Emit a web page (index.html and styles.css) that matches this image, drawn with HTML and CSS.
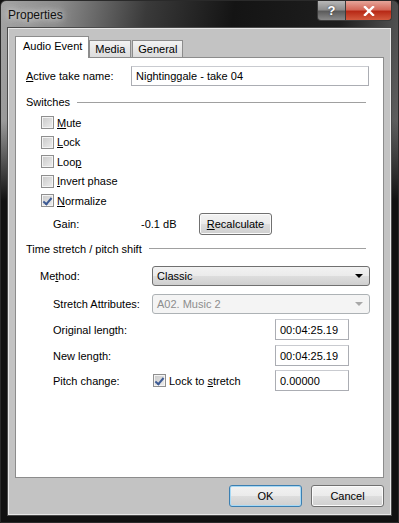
FILE: index.html
```html
<!DOCTYPE html>
<html lang="en">
<head>
    <meta charset="UTF-8">
    <title>Properties</title>
    <link rel="stylesheet" href="styles.css">
</head>
<body>
    <div class="window">
        <div class="titlebar">
            <span class="title">Properties</span>
            <div class="caption-buttons">
                <span class="cap-btn help">?</span>
                <span class="cap-btn close">
                    <svg width="12" height="10" viewBox="0 0 12 10"><path d="M2 1 L10 9 M10 1 L2 9" stroke="#fff" stroke-width="2.4" stroke-linecap="square"/></svg>
                </span>
            </div>
        </div>

        <div class="client">
            <div class="tabs">
                <span class="tab active">Audio Event</span>
                <span class="tab">Media</span>
                <span class="tab">General</span>
            </div>

            <div class="panel">
                <div class="row take-row">
                    <label class="lbl w105"><u>A</u>ctive take name:</label>
                    <div class="field w238">Nightinggale - take 04</div>
                </div>

                <div class="row group-row switches">
                    <span class="group-title">Switches</span>
                    <span class="group-line"></span>
                </div>

                <div class="checks">
                    <div class="check-row"><span class="box"></span><span><u>M</u>ute</span></div>
                    <div class="check-row"><span class="box"></span><span><u>L</u>ock</span></div>
                    <div class="check-row"><span class="box"></span><span>Loo<u>p</u></span></div>
                    <div class="check-row"><span class="box"></span><span><u>I</u>nvert phase</span></div>
                    <div class="check-row"><span class="box checked"></span><span><u>N</u>ormalize</span></div>
                </div>

                <div class="row gain-row">
                    <span class="lbl w88">Gain:</span>
                    <span class="lbl w58">-0.1 dB</span>
                    <span class="button recalc"><u>R</u>ecalculate</span>
                </div>

                <div class="row group-row stretch-group">
                    <span class="group-title">Time stretch / pitch shift</span>
                    <span class="group-line"></span>
                </div>

                <div class="row method-row">
                    <span class="lbl w112">Me<u>t</u>hod:</span>
                    <div class="combo">
                        <span>Classic</span>
                        <span class="arrow"></span>
                    </div>
                </div>

                <div class="row attr-row">
                    <span class="lbl w99">Stretch Attributes:</span>
                    <div class="combo disabled">
                        <span>A02. Music 2</span>
                        <span class="arrow"></span>
                    </div>
                </div>

                <div class="row len-row orig">
                    <span class="lbl w222">Original length:</span>
                    <div class="field w74">00:04:25.19</div>
                </div>

                <div class="row len-row newlen">
                    <span class="lbl w222">New len<u>g</u>th:</span>
                    <div class="field w74">00:04:25.19</div>
                </div>

                <div class="row len-row pitch">
                    <span class="lbl w99">Pitch change:</span>
                    <div class="lock">
                        <span class="box checked"></span>
                        <span>Lock to <u>s</u>tretch</span>
                    </div>
                    <div class="field w74">0.00000</div>
                </div>
            </div>

            <div class="footer">
                <span class="button dlg default">OK</span>
                <span class="button dlg">Cancel</span>
            </div>
        </div>
    </div>
</body>
</html>
```

FILE: styles.css
```css
body {
    margin: 0;
    width: 399px;
    height: 523px;
    font-family: "Liberation Sans", Arial, sans-serif;
    font-size: 11px;
    color: #000;
    background: #111;
}
.window {
    width: 399px;
    height: 523px;
    box-sizing: border-box;
    padding: 0 7px 7px 7px;
    display: flex;
    flex-direction: column;
    background:
        linear-gradient(to bottom, rgba(0,0,0,0) 0, rgba(0,0,0,0) 120px, #111 200px),
        linear-gradient(100deg, #a4a4a4 0, #8c8c8c 12%, #3a3a3a 30%, #141414 48%, #1e1e1e 70%, #7b7b7b 92%, #9a9a9a 100%);
    border: 1px solid #2a2a2a;
    border-radius: 6px 6px 0 0;
}
.titlebar {
    height: 27px;
    display: flex;
    justify-content: space-between;
    align-items: flex-start;
}
.title {
    margin-top: 7px;
    font-size: 12px;
    color: #111;
    text-shadow: 0 0 6px #e6e6e6, 0 0 10px #d0d0d0;
}
.caption-buttons {
    display: flex;
    margin-right: -1px;
}
.cap-btn {
    height: 20px;
    display: flex;
    align-items: center;
    justify-content: center;
    border: 1px solid #3a3a3a;
    border-top: none;
    box-sizing: border-box;
}
.help {
    width: 29px;
    border-radius: 0 0 0 4px;
    color: #fff;
    font-weight: bold;
    font-size: 13px;
    background: linear-gradient(to bottom, #b8b8b8 0, #8e8e8e 45%, #5c5c5c 55%, #8a8a8a 100%);
    text-shadow: 0 0 2px #333;
}
.close {
    width: 46px;
    border-left: none;
    border-radius: 0 0 4px 0;
    background: linear-gradient(to bottom, #e6a59a 0, #d4695a 45%, #b82a17 55%, #d35a3e 100%);
}
.client {
    flex: 1;
    background: #c3c3c3;
    border: 1px solid #e8e8e8;
    outline: 1px solid #4a4a4a;
    display: flex;
    flex-direction: column;
}
.tabs {
    display: flex;
    align-items: flex-end;
    margin: 8px 0 0 6px;
    height: 20px;
    position: relative;
    z-index: 1;
}
.tab {
    height: 16px;
    line-height: 17px;
    padding: 0 5px;
    background: linear-gradient(to bottom, #f2f2f2, #dcdcdc);
    border: 1px solid #8c8c8c;
    border-bottom: none;
    margin-right: 1px;
}
.tab.active {
    background: #fff;
    padding: 0 6px 0 7px;
    margin-bottom: -1px;
    margin-right: 0;
    height: 21px;
    line-height: 19px;
}
.panel {
    margin: 0 6px;
    height: 421px;
    box-sizing: border-box;
    background: #fff;
    border: 1px solid #8c8c8c;
    padding: 8px 0 0 10px;
}
.row {
    display: flex;
    align-items: center;
    height: 20px;
}
.lbl {
    flex: none;
}
.w88 { width: 88px; }
.w58 { width: 58px; }
.w99 { width: 99px; }
.w105 { width: 105px; }
.w112 { width: 112px; }
.w222 { width: 222px; }
.w238 { width: 238px; }
.w74 { width: 74px; }
.field {
    height: 20px;
    box-sizing: border-box;
    border: 1px solid #abadb3;
    border-top-color: #c9cbd0;
    display: flex;
    align-items: center;
    padding-left: 4px;
}
.switches {
    margin-top: 6px;
}
.group-title {
    margin-right: 7px;
}
.group-line {
    height: 0;
    border-top: 1px solid #a0a0a0;
    border-bottom: 1px solid #fff;
    margin-right: 17px;
    flex: 1;
    margin-top: 1px;
}
.checks {
    margin-top: 1px;
    padding-left: 15px;
}
.check-row {
    height: 19.5px;
    display: flex;
    align-items: center;
}
.box {
    width: 13px;
    height: 13px;
    box-sizing: border-box;
    border: 1px solid #8f8f8f;
    background: linear-gradient(135deg, #c9c9c9, #eeeeee);
    box-shadow: inset 0 0 0 1px #f4f4f4;
    margin-right: 3px;
    flex: none;
    position: relative;
}
.box.checked::after {
    content: "";
    position: absolute;
    left: 3px;
    top: 1px;
    width: 3px;
    height: 7px;
    border: solid #3c5a94;
    border-width: 0 2px 2px 0;
    transform: rotate(40deg);
}
.gain-row {
    height: 22px;
    margin-top: 2px;
    padding-left: 27px;
}
.button {
    box-sizing: border-box;
    display: flex;
    align-items: center;
    justify-content: center;
    border: 1px solid #707070;
    border-radius: 3px;
    background: linear-gradient(to bottom, #f2f2f2 0, #ebebeb 48%, #dddddd 52%, #cfcfcf 100%);
    box-shadow: inset 0 0 0 1px #fbfbfb;
}
.recalc {
    width: 73px;
    height: 22px;
}
.stretch-group {
    margin-top: 4px;
}
.method-row {
    margin-top: 7px;
    padding-left: 14px;
}
.combo {
    width: 218px;
    height: 20px;
    box-sizing: border-box;
    border: 1px solid #707070;
    border-radius: 3px;
    background: linear-gradient(to bottom, #f2f2f2 0, #ebebeb 48%, #dddddd 52%, #cfcfcf 100%);
    display: flex;
    align-items: center;
    justify-content: space-between;
    padding: 0 6px 0 4px;
}
.arrow {
    width: 0;
    height: 0;
    border-left: 4px solid transparent;
    border-right: 4px solid transparent;
    border-top: 4px solid #000;
}
.combo.disabled {
    border-color: #adb2b5;
    background: #f4f4f4;
    color: #8d8d8d;
}
.combo.disabled .arrow {
    border-top-color: #a8a8a8;
}
.attr-row {
    margin-top: 8px;
    padding-left: 27px;
}
.len-row {
    height: 22px;
    padding-left: 27px;
}
.len-row .field {
    height: 21px;
}
.orig { margin-top: 5px; }
.newlen { margin-top: 4px; }
.pitch { margin-top: 3px; }
.lock {
    width: 123px;
    display: flex;
    align-items: center;
    padding-left: 1px;
    box-sizing: border-box;
}
.footer {
    display: flex;
    justify-content: flex-end;
    gap: 9px;
    margin: 7px 6px 0 0;
}
.dlg {
    width: 73px;
    height: 22px;
}
.dlg.default {
    border-color: #3c7fb1;
    box-shadow: inset 0 0 0 1px #a7d9f5;
}
```
